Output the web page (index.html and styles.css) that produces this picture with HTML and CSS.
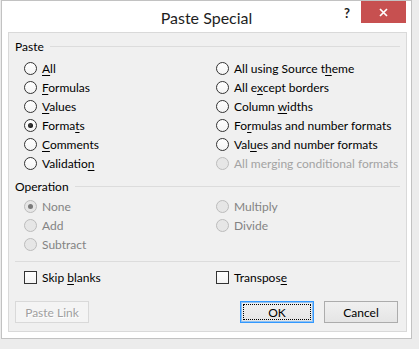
FILE: index.html
```html
<!DOCTYPE html>
<html>
<head>
    <meta charset="UTF-8">
    <title>Paste Special</title>
    <link rel="stylesheet" href="styles.css">
</head>
<body>
    <div class="window">
        <div class="titlebar">
            <span></span>
            <span class="title">Paste Special</span>
            <div class="controls">
                <span class="help">?</span>
                <span class="close">
                    <svg width="9" height="9" viewBox="0 0 9 9">
                        <path d="M1 1 L8 8 M8 1 L1 8" stroke="#fff" stroke-width="1.7" fill="none"/>
                    </svg>
                </span>
            </div>
        </div>

        <div class="panel">
            <div class="group-title">Paste</div>
            <div class="options">
                <label class="option"><input type="radio" name="paste"><span><u>A</u>ll</span></label>
                <label class="option"><input type="radio" name="paste"><span>All using Source t<u>h</u>eme</span></label>
                <label class="option"><input type="radio" name="paste"><span><u>F</u>ormulas</span></label>
                <label class="option"><input type="radio" name="paste"><span>All e<u>x</u>cept borders</span></label>
                <label class="option"><input type="radio" name="paste"><span><u>V</u>alues</span></label>
                <label class="option"><input type="radio" name="paste"><span>Column <u>w</u>idths</span></label>
                <label class="option"><input type="radio" name="paste" checked><span>Forma<u>t</u>s</span></label>
                <label class="option"><input type="radio" name="paste"><span>Fo<u>r</u>mulas and number formats</span></label>
                <label class="option"><input type="radio" name="paste"><span><u>C</u>omments</span></label>
                <label class="option"><input type="radio" name="paste"><span>Val<u>u</u>es and number formats</span></label>
                <label class="option"><input type="radio" name="paste"><span>Validatio<u>n</u></span></label>
                <label class="option faint"><input type="radio" name="paste" disabled><span>All merging conditional formats</span></label>
            </div>

            <div class="group-title op-title">Operation</div>
            <div class="options op-options">
                <label class="option off"><input type="radio" name="op" checked disabled><span>None</span></label>
                <label class="option off"><input type="radio" name="op" disabled><span>Multiply</span></label>
                <label class="option off"><input type="radio" name="op" disabled><span>Add</span></label>
                <label class="option off"><input type="radio" name="op" disabled><span>Divide</span></label>
                <label class="option off"><input type="radio" name="op" disabled><span>Subtract</span></label>
            </div>

            <div class="separator"></div>

            <div class="options checks">
                <label class="option"><input type="checkbox"><span>Skip <u>b</u>lanks</span></label>
                <label class="option"><input type="checkbox"><span>Transpos<u>e</u></span></label>
            </div>

            <div class="buttons">
                <button class="btn" disabled>Paste Link</button>
                <span class="spacer"></span>
                <button class="btn default"><span class="focus">OK</span></button>
                <button class="btn">Cancel</button>
            </div>
        </div>
    </div>
</body>
</html>
```

FILE: styles.css
```css
body {
    margin: 0;
    background-color: #ececec;
    font-family: "Segoe UI", Lato, sans-serif;
    font-size: 12px;
    color: #000;
}

.window {
    width: 409px;
    height: 337px;
    margin-left: 1px;
    border: 1px solid #c2c2c2;
    background-color: #fff;
}

/* title bar: caption centred, help + close on the right */
.titlebar {
    display: grid;
    grid-template-columns: 1fr auto 1fr;
    height: 31px;
}

.title {
    font-size: 16px;
    color: #1e1e1e;
    line-height: 31px;
    padding-top: 1px;
}

.controls {
    display: flex;
    justify-content: flex-end;
    align-items: flex-start;
    padding-right: 5px;
}

.help {
    width: 28px;
    height: 22px;
    line-height: 24px;
    text-align: center;
    font-weight: bold;
    font-size: 13px;
    color: #222;
}

.close {
    display: flex;
    align-items: center;
    justify-content: center;
    width: 45px;
    height: 22px;
    background-color: #c75050;
}

.panel {
    margin: 0 4px 0 6px;
    border: 1px solid #d9d9d9;
    background-color: #f0f0f0;
    padding: 4px 6px 0 6px;
    box-sizing: border-box;
    height: 300px;
}

.group-title {
    display: flex;
    align-items: center;
    height: 19px;
}

    .group-title::after {
        content: "";
        flex: 1;
        margin-left: 6px;
        border-top: 1px solid #dcdcdc;
    }

.op-title {
    margin-top: 4px;
}

.options {
    display: grid;
    grid-template-columns: 192px 1fr;
    grid-auto-rows: 19px;
    padding-left: 9px;
    margin-top: 3px;
}

.op-options {
    margin-top: 1px;
}

.option {
    display: flex;
    align-items: center;
    white-space: nowrap;
}

    .option u {
        text-underline-offset: 2px;
    }

.faint {
    color: #a3a3a3;
}

.off {
    color: #838383;
}

input[type="radio"],
input[type="checkbox"] {
    appearance: none;
    -webkit-appearance: none;
    margin: 0 5px 0 0;
    width: 13px;
    height: 13px;
    border: 1px solid #333;
    background: linear-gradient(#fff, #f4f4f4);
    box-sizing: border-box;
    flex: none;
}

input[type="radio"] {
    border-radius: 50%;
    display: flex;
    align-items: center;
    justify-content: center;
}

    input[type="radio"]:checked::after {
        content: "";
        width: 5px;
        height: 5px;
        border-radius: 50%;
        background: radial-gradient(circle at 40% 40%, #444, #000);
    }

    input[type="radio"]:disabled {
        border-color: #bcbcbc;
        background: #e6e6e6;
    }

        input[type="radio"]:disabled:checked::after {
            background: #7a7a7a;
        }

.separator {
    margin-top: 7px;
    border-top: 1px solid #dcdcdc;
}

.checks {
    margin-top: 6px;
}

.buttons {
    display: flex;
    gap: 10px;
    margin-top: 14px;
    padding-right: 2px;
}

.spacer {
    flex: 1;
}

.btn {
    width: 74px;
    height: 22px;
    padding: 0;
    font-family: inherit;
    font-size: 12px;
    color: #000;
    border: 1px solid #acacac;
    background: linear-gradient(#f0f0f0, #e5e5e5);
}

    .btn:disabled {
        color: #a0a0a0;
        border-color: #d9d9d9;
        background: #f4f4f4;
        text-shadow: 1px 1px 0 #fff;
    }

.default {
    border-color: #3399ff;
    box-shadow: inset 0 0 0 1px #8fc1f2;
    padding: 2px;
}

.focus {
    display: flex;
    align-items: center;
    justify-content: center;
    height: 100%;
    border: 1px dotted #000;
    box-sizing: border-box;
}
```
